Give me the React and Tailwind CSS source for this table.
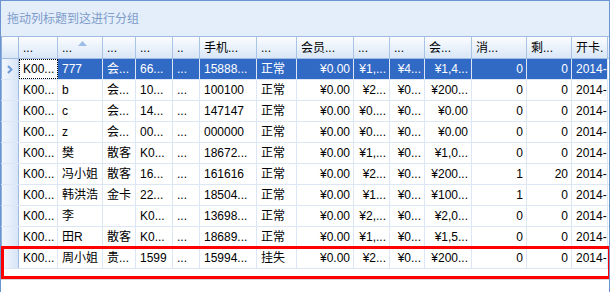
import React from "react";

const cols = [
  { w: "w-[39px]", head: "...", align: "left" },
  { w: "w-[45px]", head: "...", align: "left", sort: true },
  { w: "w-[33px]", head: "...", align: "left" },
  { w: "w-[37px]", head: "...", align: "left" },
  { w: "w-[27px]", head: "..", align: "left" },
  { w: "w-[57px]", head: "手机...", align: "left" },
  { w: "w-[40px]", head: "...", align: "left" },
  { w: "w-[57px]", head: "会员...", align: "right" },
  { w: "w-[36px]", head: "...", align: "right" },
  { w: "w-[35px]", head: "...", align: "right" },
  { w: "w-[47px]", head: "会...", align: "right" },
  { w: "w-[55px]", head: "消...", align: "right" },
  { w: "w-[45px]", head: "剩...", align: "right" },
  { w: "w-[36px]", head: "开卡.", align: "left" },
];

const rows = [
  ["K00...", "777", "会...", "66...", "...", "15888...", "正常", "¥0.00", "¥1,...", "¥4...", "¥1,4...", "0", "0", "2014-"],
  ["K00...", "b", "会...", "10...", "...", "100100", "正常", "¥0.00", "¥2...", "¥0...", "¥200...", "0", "0", "2014-"],
  ["K00...", "c", "会...", "14...", "...", "147147", "正常", "¥0.00", "¥0....", "¥0...", "¥0.00", "0", "0", "2014-"],
  ["K00...", "z", "会...", "00...", "...", "000000", "正常", "¥0.00", "¥0....", "¥0...", "¥0.00", "0", "0", "2014-"],
  ["K00...", "樊", "散客", "K0...", "...", "18672...", "正常", "¥0.00", "¥1,...", "¥0...", "¥1,0...", "0", "0", "2014-"],
  ["K00...", "冯小姐", "散客", "16...", "...", "161616", "正常", "¥0.00", "¥2...", "¥0...", "¥200...", "1", "20", "2014-"],
  ["K00...", "韩洪浩", "金卡", "22...", "...", "18504...", "正常", "¥0.00", "¥1...", "¥0...", "¥100...", "1", "0", "2014-"],
  ["K00...", "李", "", "K0...", "...", "13698...", "正常", "¥0.00", "¥2,...", "¥0...", "¥2,0...", "0", "0", "2014-"],
  ["K00...", "田R", "散客", "K0...", "...", "18689...", "正常", "¥0.00", "¥1,...", "¥0...", "¥1,5...", "0", "0", "2014-"],
  ["K00...", "周小姐", "贵...", "1599", "...", "15994...", "挂失", "¥0.00", "¥2...", "¥0...", "¥200...", "0", "0", "2014-"],
];

const font = { fontFamily: '"Liberation Sans", "Noto Sans CJK SC", sans-serif' };

export default function App() {
  return (
    <div
      className="relative w-[610px] h-[292px] bg-white border-t border-l border-r border-[#6b95cf] overflow-hidden text-[12px] text-black"
      style={font}
    >
      {/* group panel */}
      <div className="h-[35px] bg-[#e4eefb] flex items-center pl-[6px] text-[#7d9bc9]">
        拖动列标题到这进行分组
      </div>

      {/* header */}
      <div className="flex h-[23px] border-t border-b border-[#9fbbe2] bg-gradient-to-b from-[#fbfdff] to-[#d9e6f7]">
        <div className="w-[18px] h-full border-r border-[#9fbbe2] border-l border-l-[#8fb0dc] shrink-0" />
        {cols.map((c, i) => (
          <div
            key={i}
            className={`${c.w} shrink-0 h-full border-r border-[#a9c3e6] flex items-center pl-[4px] overflow-hidden whitespace-nowrap relative`}
          >
            {c.head}
            {c.sort && (
              <svg className="absolute left-[20px] top-[4px]" width="9" height="5" viewBox="0 0 9 5">
                <polygon points="0,5 4.5,0 9,5" fill="#9dbde8" />
              </svg>
            )}
          </div>
        ))}
      </div>

      {/* rows */}
      {rows.map((r, ri) => {
        const sel = ri === 0;
        return (
          <div key={ri} className="flex h-[21px] border-b border-[#dce6f4]">
            <div className="w-[18px] shrink-0 h-full border-r border-[#9fbbe2] border-l border-l-[#8fb0dc] bg-gradient-to-r from-[#f3f7fd] to-[#d7e5f7] flex items-center justify-center">
              {sel && (
                <svg width="6" height="9" viewBox="0 0 6 9">
                  <polyline points="1,1 4.5,4.5 1,8" fill="none" stroke="#6f9ad8" strokeWidth="2" />
                </svg>
              )}
            </div>
            {r.map((v, ci) => {
              const c = cols[ci];
              const focus = sel && ci === 0;
              let cls = `${c.w} shrink-0 h-full border-r flex items-center overflow-hidden whitespace-nowrap `;
              cls += c.align === "right" ? "justify-end pr-[3px] " : "pl-[4px] ";
              if (focus) cls += "bg-white text-black border-[#dce6f4] outline outline-1 outline-dotted outline-black -outline-offset-1 ";
              else if (sel) cls += "bg-[#316ac5] text-white border-[#dce6f4] ";
              else cls += "border-[#dce6f4] ";
              return (
                <div key={ci} className={cls}>
                  {v}
                </div>
              );
            })}
          </div>
        );
      })}

      <div className="h-[10px]" />
      <div className="h-px bg-[#d6d6d6]" />

      {/* annotation */}
      <div className="absolute left-0 top-[245px] w-[610px] h-[33px] border-[3px] border-[#ff0000] pointer-events-none" />
    </div>
  );
}
